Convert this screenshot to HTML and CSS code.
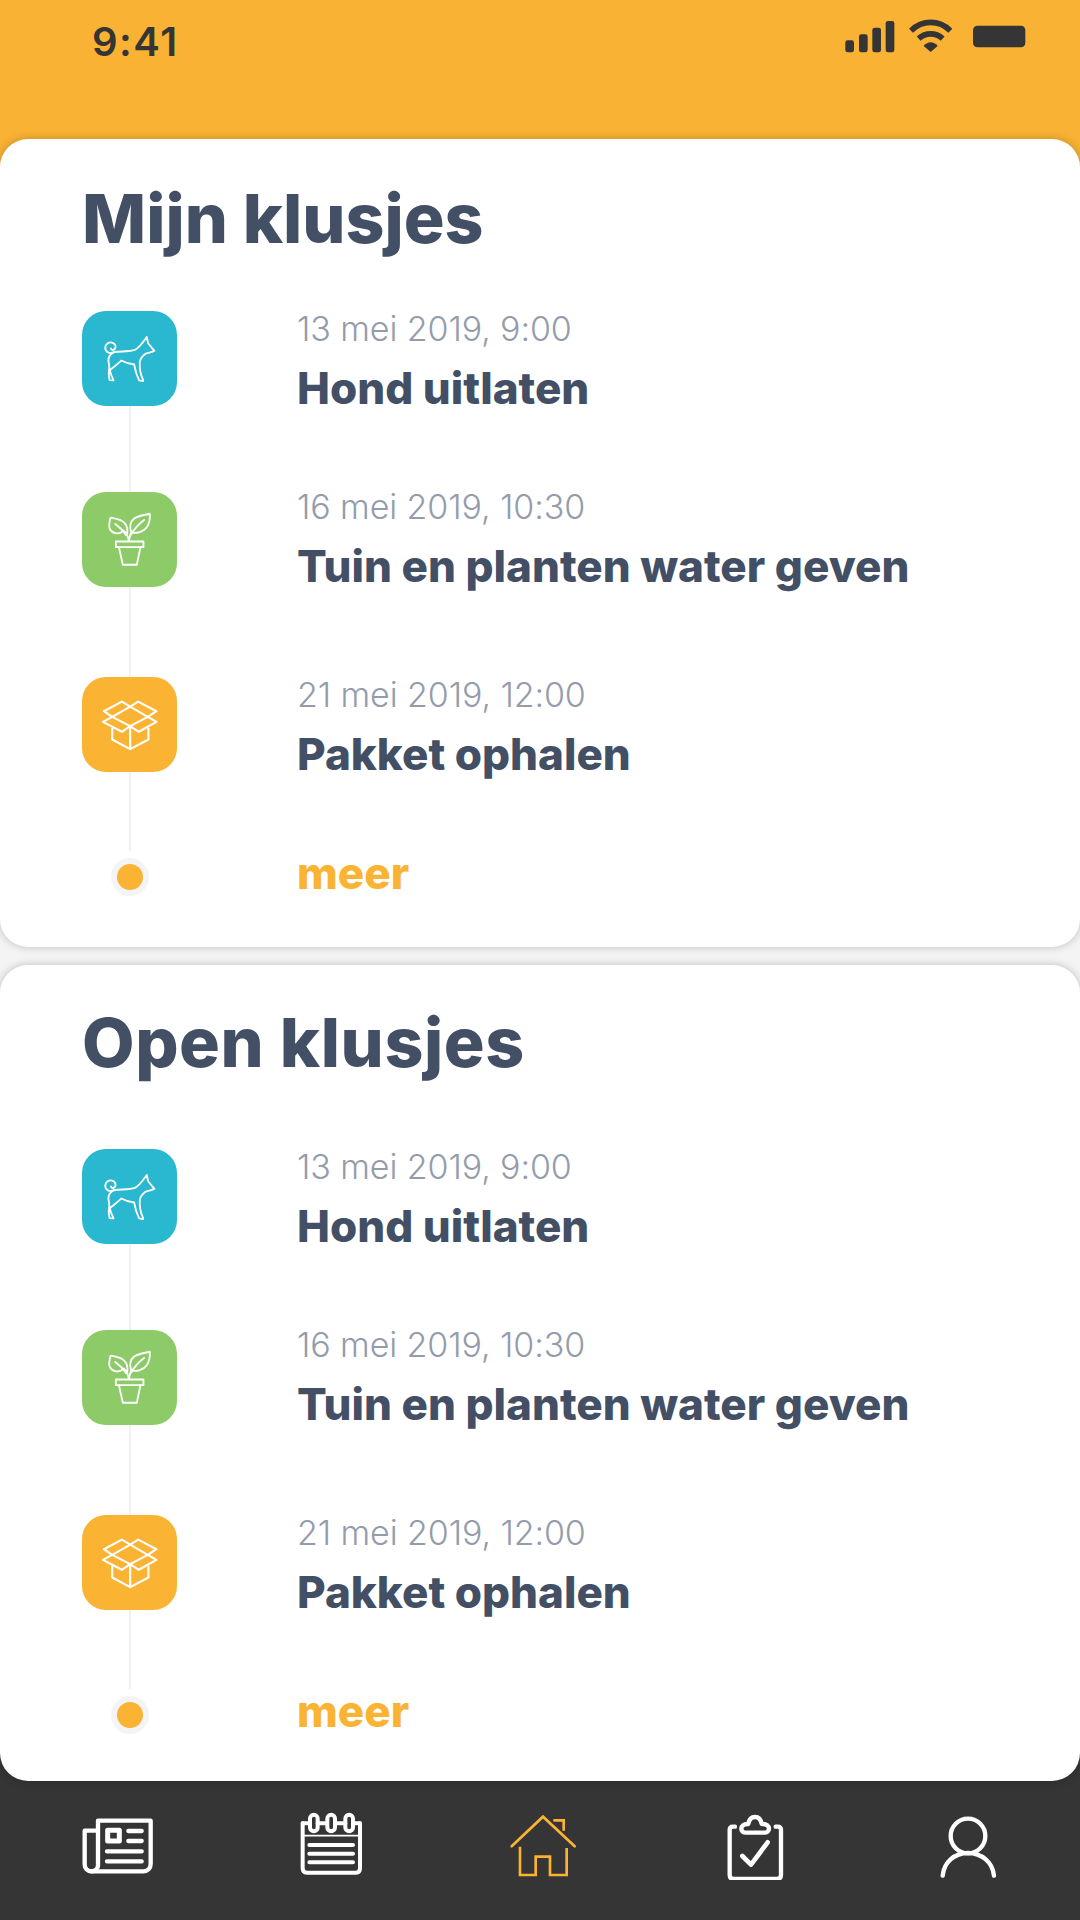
FILE: index.html
```html
<!DOCTYPE html>
<html lang="nl">
<head>
<meta charset="utf-8">
<title>Klusjes</title>
<link rel="stylesheet" href="styles.css">
</head>
<body>
<svg class="defs" aria-hidden="true">
  <symbol id="dog" viewBox="67 63 286 286">
    <g fill="none" stroke="#fff" stroke-width="5.5" stroke-linecap="round" stroke-linejoin="round">
      <path d="M164 187C150 193 137 187 137 174C137 162 148 156 157 158C167 160 171 170 166 177C162 182 155 181 154 176"/>
      <path d="M164 187C185 184 210 186 226 180C238 175 250 158 262 141L266 160L285 183C278 188 268 188 258 192C250 198 243 206 241 216C240 234 243 254 250 268L251 274L239 272C232 258 227 242 224 224C210 222 196 218 185 212C176 222 162 232 152 240C150 248 156 258 162 272L150 271C147 258 146 248 149 234C150 224 145 216 147 206C149 197 155 191 164 187Z"/>
    </g>
  </symbol>
  <symbol id="plant" viewBox="67 66 286 286">
    <g fill="none" stroke="#fff" stroke-width="5.5" stroke-linecap="round" stroke-linejoin="round">
      <path d="M169 215H252V232H169Z"/>
      <path d="M178 232L190 285H232L243 232"/>
      <path d="M208 214C206 200 200 188 192 182C178 196 160 192 151 178C146 168 150 154 153 143C168 146 184 148 194 158C204 168 206 178 203 196"/>
      <path d="M167 162C178 170 190 180 200 196"/>
      <path d="M208 214C210 202 212 194 215 188C232 192 252 186 262 172C270 160 272 144 271 131C256 136 236 137 224 146C212 156 210 172 215 188"/>
      <path d="M254 150C240 160 226 174 212 198"/>
    </g>
  </symbol>
  <symbol id="box" viewBox="67 50 286 286">
    <g fill="none" stroke="#fff" stroke-width="6.5" stroke-linecap="round" stroke-linejoin="round">
      <path d="M212 139L187 124L133 153L158 170Z"/>
      <path d="M212 139L236 124L291 153L265 170Z"/>
      <path d="M158 170L130 185L187 215L212 198Z"/>
      <path d="M265 170L291 185L238 215L212 198Z"/>
      <path d="M158 206V238L212 267L267 238V206"/>
      <path d="M212 198V267"/>
    </g>
  </symbol>
</svg>

<div class="app">
  <header class="top">
    <span class="clock">9:41</span>
    <svg class="status" viewBox="190 50 555 114">
      <g fill="#353535">
        <rect x="197" y="120" width="26" height="36" rx="7"/>
        <rect x="238" y="102" width="26" height="54" rx="7"/>
        <rect x="278" y="82" width="26" height="74" rx="7"/>
        <rect x="318" y="62" width="26" height="94" rx="7"/>
        <path d="M453 155L432 137C444 122 462 122 474 137Z"/>
        <rect x="580" y="76" width="157" height="65" rx="13"/>
      </g>
      <g fill="none" stroke="#353535" stroke-width="17" stroke-linejoin="round">
        <path d="M394 91C428 58 478 58 512 91"/>
        <path d="M417 115C438 96 468 96 489 115"/>
      </g>
    </svg>
  </header>

  <main class="cards">
    <section class="card card-first">
      <h1 class="card-title">Mijn klusjes</h1>
      <ul class="timeline">
        <li class="row row-first">
          <span class="tile tile-teal"><svg class="tile-icon"><use href="#dog"/></svg></span>
          <div class="info"><span class="date">13 mei 2019, 9:00</span><span class="job">Hond uitlaten</span></div>
        </li>
        <li class="row row-second">
          <span class="tile tile-green"><svg class="tile-icon"><use href="#plant"/></svg></span>
          <div class="info info-up"><span class="date">16 mei 2019, 10:30</span><span class="job">Tuin en planten water geven</span></div>
        </li>
        <li class="row row-third">
          <span class="tile tile-yellow"><svg class="tile-icon"><use href="#box"/></svg></span>
          <div class="info"><span class="date">21 mei 2019, 12:00</span><span class="job">Pakket ophalen</span></div>
        </li>
        <li class="row row-more">
          <span class="dot-cell"><span class="dot"></span></span>
          <span class="more">meer</span>
        </li>
      </ul>
    </section>

    <section class="card card-second">
      <h1 class="card-title">Open klusjes</h1>
      <ul class="timeline">
        <li class="row row-first">
          <span class="tile tile-teal"><svg class="tile-icon"><use href="#dog"/></svg></span>
          <div class="info"><span class="date">13 mei 2019, 9:00</span><span class="job">Hond uitlaten</span></div>
        </li>
        <li class="row row-second">
          <span class="tile tile-green"><svg class="tile-icon"><use href="#plant"/></svg></span>
          <div class="info info-up"><span class="date">16 mei 2019, 10:30</span><span class="job">Tuin en planten water geven</span></div>
        </li>
        <li class="row row-third">
          <span class="tile tile-yellow"><svg class="tile-icon"><use href="#box"/></svg></span>
          <div class="info"><span class="date">21 mei 2019, 12:00</span><span class="job">Pakket ophalen</span></div>
        </li>
        <li class="row row-more">
          <span class="dot-cell"><span class="dot"></span></span>
          <span class="more">meer</span>
        </li>
      </ul>
    </section>
  </main>

  <nav class="nav">
    <svg class="nav-icon" viewBox="220 150 270 210">
      <g fill="none" stroke="#fff" stroke-width="13" stroke-linecap="round" stroke-linejoin="round">
        <path d="M295 316V182H453V312C453 325 444 334 431 334H275C263 334 255 325 255 313V212H295"/>
        <path d="M295 316C295 326 288 334 275 334"/>
        <path d="M324 211H359V243H324Z" stroke-width="15"/>
        <path d="M386 213H426M386 243H426M322 274H426M322 304H426"/>
      </g>
    </svg>
    <svg class="nav-icon" viewBox="855 150 270 210">
      <g fill="none" stroke="#fff" stroke-width="12" stroke-linecap="round" stroke-linejoin="round">
        <path d="M905 190V325C905 333 910 338 918 338H1065C1073 338 1077 333 1077 325V190"/>
        <path d="M905 190H925M950 190H978M1003 190H1033M1058 190H1077"/>
        <rect x="927" y="164" width="23" height="50" rx="11.5"/>
        <rect x="979" y="164" width="23" height="50" rx="11.5"/>
        <rect x="1033" y="164" width="23" height="50" rx="11.5"/>
        <path d="M905 227H1077" stroke-width="5"/>
        <path d="M925 255H1056M925 281H1056M925 307H1056"/>
      </g>
    </svg>
    <svg class="nav-icon" viewBox="52 150 270 210">
      <g fill="none" stroke="#fab333" stroke-width="8" stroke-linecap="round">
        <path d="M93 259L187 170L282 259"/>
        <path d="M118 260V345H165V290H208V345H258V264" stroke-linecap="butt"/>
        <path d="M218 181H249V212" stroke-linecap="butt"/>
      </g>
    </svg>
    <svg class="nav-icon" viewBox="689 150 270 210">
      <g fill="none" stroke="#fff" stroke-width="13" stroke-linecap="round" stroke-linejoin="round">
        <path d="M764 200H758C751 200 748 204 748 210V345C748 353 752 357 760 357H890C898 357 902 353 902 345V210C902 204 899 200 892 200H886"/>
        <path d="M797 218C788 218 783 213 783 206C783 197 791 192 801 192H804C806 180 813 171 824 171C835 171 842 180 844 192H848C858 192 866 197 866 206C866 213 860 218 852 218Z"/>
        <path d="M786 288L812 314L862 247" stroke-width="14"/>
      </g>
    </svg>
    <svg class="nav-icon" viewBox="425 150 270 210">
      <g fill="none" stroke="#fff" stroke-width="13" stroke-linecap="round">
        <circle cx="560" cy="228" r="52"/>
        <path d="M484 347C488 306 520 279 560 279C600 279 634 306 638 347"/>
      </g>
    </svg>
  </nav>
</div>
</body>
</html>
```
FILE: styles.css
```css
* { box-sizing: border-box; }

html, body { margin: 0; padding: 0; }

body {
  width: 1080px;
  height: 1920px;
  overflow: hidden;
  background: #f4f4f4;
  font-family: "Inter", "Noto Sans", sans-serif;
}

.defs { display: none; }

.app {
  display: flex;
  flex-direction: column;
  height: 1920px;
}

.top {
  display: flex;
  justify-content: space-between;
  align-items: flex-start;
  height: 167px;
  margin-bottom: -28px;
  padding: 17px 52px 0 92px;
  background: #f9b233;
}

.clock {
  font-size: 40px;
  font-weight: 600;
  line-height: 50px;
  letter-spacing: 1.5px;
  color: #353535;
}

.status {
  width: 185px;
  height: 38px;
}

.cards {
  position: relative;
  z-index: 1;
  display: flex;
  flex-direction: column;
  gap: 18px;
}

.card {
  padding: 0 0 0 82px;
  background: #fff;
  border-radius: 28px;
  box-shadow: 0 0 10px rgba(0, 0, 0, .22);
}

.card-first { height: 808px; padding-top: 38px; }
.card-second { height: 816px; padding-top: 36px; }

.card-title {
  margin: 0 0 52px;
  height: 82px;
  font-size: 68px;
  font-weight: 800;
  line-height: 82px;
  color: #434f65;
}

.card-second .card-title {
  margin-bottom: 66px;
  letter-spacing: 0.6px;
}

.timeline {
  position: relative;
  margin: 0;
  padding: 0;
  list-style: none;
}

.timeline::before {
  content: "";
  position: absolute;
  left: 46.5px;
  top: 0;
  width: 2px;
  height: 540px;
  background: #f1f1f1;
}

.row {
  position: relative;
  display: flex;
  align-items: flex-start;
  height: 95px;
}

.row-first { margin-bottom: 86px; }
.row-second { margin-bottom: 90px; }
.row-third { margin-bottom: 86px; }
.row-more { height: 50px; }

.tile {
  display: flex;
  flex: none;
  width: 95px;
  height: 95px;
  border-radius: 24px;
}

.tile-teal { background: #29b8cf; }
.tile-green { background: #8dca68; }
.tile-yellow { background: #fab333; }

.tile-icon {
  width: 95px;
  height: 95px;
}

.info {
  display: flex;
  flex-direction: column;
  margin: -2px 0 0 120px;
}

.info-up { margin-top: -5px; }

.date {
  height: 40px;
  font-size: 34px;
  font-weight: 300;
  line-height: 40px;
  letter-spacing: -0.1px;
  color: #949cac;
  white-space: nowrap;
}

.job {
  margin-top: 14px;
  height: 50px;
  font-size: 44px;
  font-weight: 800;
  line-height: 50px;
  color: #434f65;
  white-space: nowrap;
}

.dot-cell {
  display: flex;
  flex: none;
  justify-content: center;
  width: 95px;
}

.dot {
  width: 38px;
  height: 38px;
  background: #fab333;
  border: 6px solid #f4f4f4;
  border-radius: 50%;
}

.more {
  margin: -10px 0 0 120px;
  font-size: 44px;
  font-weight: 800;
  line-height: 50px;
  color: #fab333;
}

.nav {
  display: grid;
  grid-template-columns: repeat(5, 1fr);
  flex: 1;
  margin-top: -28px;
  padding: 57px 6px 0 12px;
  background: #353535;
}

.nav-icon {
  justify-self: center;
  width: 90px;
  height: 70px;
}
```
